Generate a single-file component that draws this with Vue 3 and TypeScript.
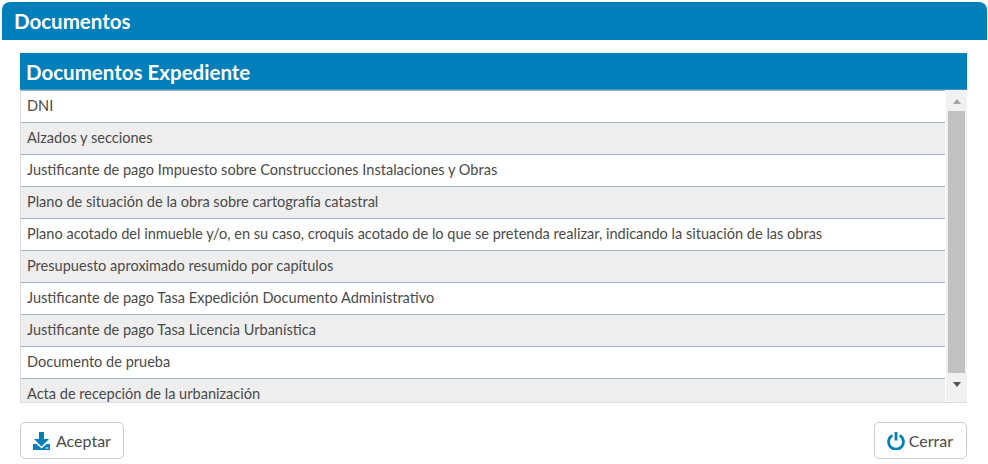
<script setup lang="ts">
const documentos: string[] = [
  'DNI',
  'Alzados y secciones',
  'Justificante de pago Impuesto sobre Construcciones Instalaciones y Obras',
  'Plano de situación de la obra sobre cartografía catastral',
  'Plano acotado del inmueble y/o, en su caso, croquis acotado de lo que se pretenda realizar, indicando la situación de las obras',
  'Presupuesto aproximado resumido por capítulos',
  'Justificante de pago Tasa Expedición Documento Administrativo',
  'Justificante de pago Tasa Licencia Urbanística',
  'Documento de prueba',
  'Acta de recepción de la urbanización',
]
</script>

<template>
  <div class="page">
    <header class="top">Documentos</header>

    <section class="panel">
      <h2 class="panel-title">Documentos Expediente</h2>
      <div class="list-wrap">
        <ul class="list">
          <li v-for="doc in documentos" :key="doc" class="row">{{ doc }}</li>
        </ul>
        <div class="scrollbar" aria-hidden="true">
          <span class="arrow up"></span>
          <span class="thumb"></span>
          <span class="arrow down"></span>
        </div>
      </div>
    </section>

    <footer class="actions">
      <button type="button" class="btn aceptar">
        <svg class="ico" width="18" height="18" viewBox="0 0 18 18">
          <path fill="#017fbb" d="M6 0h5v7h5l-7.500 7.500L1 7h5z" />
          <path fill="#017fbb" d="M0 12h3.500l5 4.500 5-4.500H17v6H0z" />
          <rect x="12.500" y="15.500" width="3" height="1" fill="#fff" />
        </svg>
        Aceptar
      </button>
      <button type="button" class="btn cerrar">
        <svg class="ico" width="18" height="18" viewBox="0 0 18 18">
          <path
            d="M5.300 3.400a7.400 7.400 0 1 0 7.400 0"
            fill="none"
            stroke="#017fbb"
            stroke-width="2.800"
          />
          <path d="M9 0v8.500" fill="none" stroke="#017fbb" stroke-width="2.800" />
        </svg>
        Cerrar
      </button>
    </footer>
  </div>
</template>

<style>
body {
  background: #fff;
}
</style>

<style scoped>
.page {
  width: 988px;
  height: 464px;
  box-sizing: border-box;
  padding-top: 2px;
  overflow: hidden;
  font-family: Lato, 'Noto Sans', sans-serif;
  color: #4a4a4a;
}
.top {
  margin: 0 1px 13px 2px;
  height: 38px;
  padding-left: 12px;
  line-height: 38px;
  background: #017fbb;
  color: #fff;
  font-size: 20.5px;
  font-weight: 700;
  border-radius: 8px 8px 0 0;
}
.panel {
  margin: 0 21px 0 20px;
}
.panel-title {
  margin: 0;
  height: 37px;
  padding-left: 6px;
  line-height: 38px;
  background: #017fbb;
  color: #fff;
  font-size: 20.5px;
  font-weight: 700;
  box-shadow: inset 0 -1px 0 #3e97c6;
}
.list-wrap {
  display: flex;
  height: 313px;
  overflow: hidden;
  border-bottom: 1px solid #ddd;
  box-sizing: border-box;
}
.list {
  flex: 1;
  margin: 0;
  padding: 0;
  list-style: none;
  border-left: 1px solid #ddd;
}
.row {
  height: 32px;
  box-sizing: border-box;
  padding-left: 6px;
  line-height: 30px;
  font-size: 14.55px;
  white-space: nowrap;
  border-top: 1px solid #a2b2c4;
}
.row:nth-child(odd) {
  background: #fff;
}
.row:nth-child(even) {
  background: #eee;
}
.scrollbar {
  width: 21px;
  margin-left: 1px;
  display: flex;
  flex-direction: column;
  align-items: center;
  background: #f1f1f1;
}
.arrow {
  width: 0;
  height: 0;
  border-left: 4px solid transparent;
  border-right: 4px solid transparent;
}
.arrow.up {
  margin: 9px 0 7px;
  border-bottom: 5px solid #a3a3a3;
}
.arrow.down {
  margin: 9px 0 0;
  border-top: 5px solid #505050;
}
.thumb {
  width: 17px;
  height: 262px;
  background: #c1c1c1;
}
.actions {
  display: flex;
  justify-content: space-between;
  margin: 19px 21px 0 20px;
}
.btn {
  display: flex;
  align-items: center;
  gap: 5px;
  height: 37px;
  padding: 0 12px;
  background: #fff;
  border: 1px solid #ccc;
  border-radius: 5px;
  font: inherit;
  font-size: 16px;
  color: #4a4a4a;
}
.cerrar {
  padding-right: 13px;
  gap: 4px;
}
</style>
